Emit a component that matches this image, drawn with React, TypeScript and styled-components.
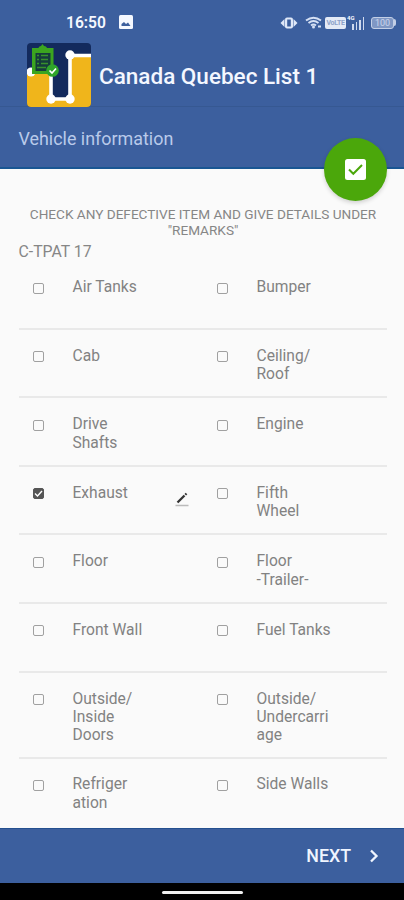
import React, { useState } from 'react';
import styled, { createGlobalStyle } from 'styled-components';

const GlobalStyle = createGlobalStyle`
  * { box-sizing: border-box; }
  body { margin: 0; background: #fafafa; font-family: Roboto, sans-serif; }
`;

const Screen = styled.div`
  width: 404px;
  height: 900px;
  display: flex;
  flex-direction: column;
  overflow: hidden;
  background: #fafafa;
`;

const StatusBar = styled.div`
  height: 42px;
  flex: none;
  display: flex;
  align-items: center;
  padding: 3px 8px 0 66px;
  background: #3c5f9e;
  color: #f5f8ff;
`;

const Clock = styled.span`
  width: 40px;
  font-size: 15.6px;
  font-weight: 600;
  line-height: 18px;
  white-space: nowrap;
`;

const PhotoIcon = styled.svg`
  margin: 0 0 1px 13px;
`;

const StatusIcons = styled.div`
  margin-left: auto;
  display: flex;
  align-items: center;
`;

const StatusGlyph = styled.svg<{ $gap?: number }>`
  display: block;
  margin-left: ${(p) => p.$gap ?? 0}px;
`;

const VolteBadge = styled.span`
  width: 21px;
  height: 12px;
  margin-left: 3px;
  border-radius: 2px;
  background: #e4eaf6;
  color: #8da2c9;
  font-size: 7px;
  font-weight: 700;
  line-height: 12px;
  letter-spacing: -0.3px;
  text-align: center;
`;

const Signal = styled.div`
  width: 17px;
  height: 15px;
  margin-left: 1px;
  display: flex;
  align-items: flex-end;
  justify-content: flex-end;
  gap: 2px;
  position: relative;
`;

const SignalLabel = styled.span`
  position: absolute;
  left: 0;
  top: -1px;
  font-size: 6px;
  font-weight: 700;
  line-height: 7px;
`;

const SignalBar = styled.span<{ $h: number }>`
  width: 1.5px;
  height: ${(p) => p.$h}px;
  background: #cfdaef;
`;

const Battery = styled.span`
  width: 23px;
  height: 12px;
  margin-left: 7px;
  border: 1px solid #c3cfe6;
  border-radius: 3px;
  background: #7f97c4;
  color: #c9d5ec;
  font-size: 9px;
  line-height: 10px;
  text-align: center;
`;

const BatteryTip = styled.span`
  width: 2px;
  height: 7px;
  border-radius: 0 2px 2px 0;
  background: #c3cfe6;
`;

const TitleBar = styled.header`
  height: 65px;
  flex: none;
  display: flex;
  align-items: flex-start;
  padding: 1px 0 0 27px;
  background: #3c5f9e;
  border-bottom: 1px solid #365892;
`;

const Title = styled.h1`
  margin: 20px 0 0 8px;
  color: #f4f7ff;
  font-size: 22.5px;
  font-weight: 500;
  line-height: 26px;
  white-space: nowrap;
`;

const SectionBar = styled.div`
  position: relative;
  height: 62px;
  flex: none;
  padding: 21px 18.5px 0;
  background: #3c5f9e;
  border-bottom: 2px solid #195693;
`;

const SectionTitle = styled.h2`
  margin: 0;
  color: #b9caea;
  font-size: 17.9px;
  font-weight: 400;
  line-height: 22px;
`;

const ConfirmButton = styled.button`
  position: absolute;
  right: 17px;
  top: 31px;
  width: 63px;
  height: 63px;
  padding: 0;
  border: 0;
  border-radius: 50%;
  display: flex;
  align-items: center;
  justify-content: center;
  background: #4ba70b;
  box-shadow: 0 2px 4px rgba(0, 0, 0, 0.17);
`;

const Content = styled.main`
  flex: 1;
  min-height: 0;
  overflow: hidden;
  padding: 38px 17px 0 19px;
`;

const Instructions = styled.p`
  margin: 0 -4px 0 -4px;
  color: #868686;
  font-size: 13.6px;
  line-height: 15.5px;
  text-align: center;
`;

const GroupTitle = styled.h3`
  margin: 5px 0 0 -0.5px;
  color: #868686;
  font-size: 15.8px;
  font-weight: 400;
  line-height: 18px;
`;

const Row = styled.div`
  display: grid;
  grid-template-columns: 184px 184px;
  min-height: 68.6px;
  padding: 17px 0 12.5px;
  border-bottom: 2px solid #e9e9e9;
  &:last-child {
    padding-top: 16px;
    border-bottom: 0;
  }
`;

const Item = styled.label`
  display: flex;
  align-items: flex-start;
`;

const Checkbox = styled.input`
  appearance: none;
  width: 11px;
  height: 11px;
  flex: none;
  margin: 4.5px 28.5px 0 14px;
  border: 1.5px solid #a0a0a0;
  border-radius: 2px;
  background: #fafafa;
  &:checked {
    border-color: #555;
    background: #555 url("data:image/svg+xml,%3Csvg xmlns='http://www.w3.org/2000/svg' viewBox='0 0 9 9'%3E%3Cpath d='M1 4.5 3.5 7 8 2' fill='none' stroke='white' stroke-width='1.4'/%3E%3C/svg%3E") center / 9px 9px no-repeat;
  }
`;

const ItemName = styled.span`
  width: 76px;
  color: #828282;
  font-size: 15.6px;
  line-height: 18.4px;
  overflow-wrap: anywhere;
  white-space: pre-line;
`;

const EditIcon = styled.svg`
  margin: 8.5px 0 0 26.5px;
  flex: none;
`;

const Footer = styled.footer`
  height: 55px;
  flex: none;
  display: flex;
  align-items: center;
  justify-content: flex-end;
  padding: 0 25px 0 0;
  background: #3c5f9e;
  border-top: 1px solid #24508f;
`;

const NextButton = styled.button`
  display: flex;
  align-items: center;
  gap: 18px;
  padding: 0;
  border: 0;
  background: none;
  color: #f0f5ff;
  font: 500 17.8px/20px Roboto, sans-serif;
`;

const SystemNav = styled.div`
  height: 17px;
  flex: none;
  display: flex;
  justify-content: center;
  padding-top: 8px;
  background: #000;
`;

const HomeHandle = styled.span`
  width: 81px;
  height: 3px;
  border-radius: 2px;
  background: #f0f0f0;
`;

const rows: [string, string][] = [
  ['Air Tanks', 'Bumper'],
  ['Cab', 'Ceiling/\nRoof'],
  ['Drive\nShafts', 'Engine'],
  ['Exhaust', 'Fifth\nWheel'],
  ['Floor', 'Floor\n-Trailer-'],
  ['Front Wall', 'Fuel Tanks'],
  ['Outside/\nInside\nDoors', 'Outside/\nUndercarri\u200bage'],
  ['Refriger\u200bation', 'Side Walls'],
];

function AppLogo() {
  return (
    <svg width="64" height="64" viewBox="0 0 64 64">
      <defs>
        <clipPath id="logo-frame"><rect width="64" height="64" rx="4" /></clipPath>
      </defs>
      <g clipPath="url(#logo-frame)">
        <rect width="64" height="64" fill="#132a5d" />
        <path d="M0 27H24V56H43V12H64V64H0Z" fill="#f0b51b" />
        <path d="M24 28V56H43V12" fill="#132a5d" />
        <path d="M0 28.5H24V56H43V12.5H64" fill="none" stroke="#fff" strokeWidth="3.6" />
        <g fill="#fff">
          <circle cx="4" cy="29" r="4.5" />
          <circle cx="24" cy="56" r="4.7" />
          <circle cx="43" cy="56" r="4.7" />
          <circle cx="43" cy="12" r="4.7" />
        </g>
      </g>
      <path d="M5 5H11.5C12 3.5 13 3.3 14 3L15.5 1L17 3C18.5 3.3 19.5 3.7 20 5H26.5V31H5Z" fill="#3ba51f" />
      <path d="M8.5 10H23.5V28H8.5Z" fill="#153c3b" />
      <path d="M10 12.5H12M14 12.5H21M10 16.5H12M14 16.5H21M10 20.5H12M14 20.5H21M10 24.5H19" stroke="#38912c" strokeWidth="1.5" />
      <circle cx="25.5" cy="27.5" r="6.3" fill="#2fa52a" />
      <path d="M22.5 27.5 25 30 29 25.5" fill="none" stroke="#fff" strokeWidth="1.7" />
    </svg>
  );
}

export default function App() {
  const [checked, setChecked] = useState<string[]>(['Exhaust']);
  const toggle = (name: string) =>
    setChecked((c) => (c.includes(name) ? c.filter((n) => n !== name) : [...c, name]));

  return (
    <>
      <GlobalStyle />
      <Screen>
        <StatusBar>
          <Clock>16:50</Clock>
          <PhotoIcon width="14" height="14" viewBox="0 0 14 14">
            <rect width="14" height="14" rx="1.5" fill="#f5f8ff" />
            <path d="M2.5 11V9L5 7L7 9L9 7.5L11.5 11Z" fill="#3c5f9e" />
          </PhotoIcon>
          <StatusIcons>
            <StatusGlyph width="18" height="12" viewBox="0 0 18 12">
              <rect x="5" y="0.5" width="8" height="11" rx="2" fill="#dfe8f8" />
              <rect x="7.2" y="2.5" width="3.6" height="7" fill="#3c5f9e" />
              <path d="M4.5 2V10L0.5 6ZM13.5 2V10L17.5 6Z" fill="#dfe8f8" />
            </StatusGlyph>
            <StatusGlyph $gap={7} width="17" height="13" viewBox="0 0 17 13">
              <path d="M1 4.5Q8.5-1 16 4.5M3.5 7Q8.5 3 13.5 7M6 9.5Q8.5 7.5 11 9.5" fill="none" stroke="#d5e0f4" strokeWidth="1.9" />
              <circle cx="8.5" cy="11" r="1.5" fill="#d5e0f4" />
              <path d="M13 10.5H16" stroke="#d5e0f4" strokeWidth="2" />
            </StatusGlyph>
            <VolteBadge>VoLTE</VolteBadge>
            <Signal>
              <SignalLabel>4G</SignalLabel>
              <SignalBar $h={6} />
              <SignalBar $h={8} />
              <SignalBar $h={10} />
              <SignalBar $h={13} />
            </Signal>
            <Battery>100</Battery>
            <BatteryTip />
          </StatusIcons>
        </StatusBar>
        <TitleBar>
          <AppLogo />
          <Title>Canada Quebec List 1</Title>
        </TitleBar>
        <SectionBar>
          <SectionTitle>Vehicle information</SectionTitle>
          <ConfirmButton aria-label="Confirm">
            <svg width="21" height="21" viewBox="0 0 21 21">
              <rect width="21" height="21" rx="2.5" fill="#fff" />
              <path d="M4 10.5 8.3 14.8 17 6" fill="none" stroke="#4ba70b" strokeWidth="2" />
            </svg>
          </ConfirmButton>
        </SectionBar>
        <Content>
          <Instructions>
            CHECK ANY DEFECTIVE ITEM AND GIVE DETAILS UNDER "REMARKS"
          </Instructions>
          <GroupTitle>C-TPAT 17</GroupTitle>
          {rows.map((pair) => (
            <Row key={pair[0]}>
              {pair.map((name) => (
                <Item key={name}>
                  <Checkbox type="checkbox" checked={checked.includes(name)} onChange={() => toggle(name)} />
                  <ItemName>{name}</ItemName>
                  {checked.includes(name) && (
                    <EditIcon width="14" height="15" viewBox="0 0 14 15">
                      <path d="M2.5 10.5 9.5 3.5" stroke="#333" strokeWidth="2.3" />
                      <path d="M10.3 2.7 11.5 1.5" stroke="#333" strokeWidth="2.3" />
                      <path d="M0.5 13.5H13.5" stroke="#bbb" strokeWidth="1.5" />
                    </EditIcon>
                  )}
                </Item>
              ))}
            </Row>
          ))}
        </Content>
        <Footer>
          <NextButton>
            NEXT
            <svg width="10" height="14" viewBox="0 0 10 14">
              <path d="M2 1.5 7.5 7 2 12.5" fill="none" stroke="#f0f5ff" strokeWidth="2.3" />
            </svg>
          </NextButton>
        </Footer>
        <SystemNav><HomeHandle /></SystemNav>
      </Screen>
    </>
  );
}
